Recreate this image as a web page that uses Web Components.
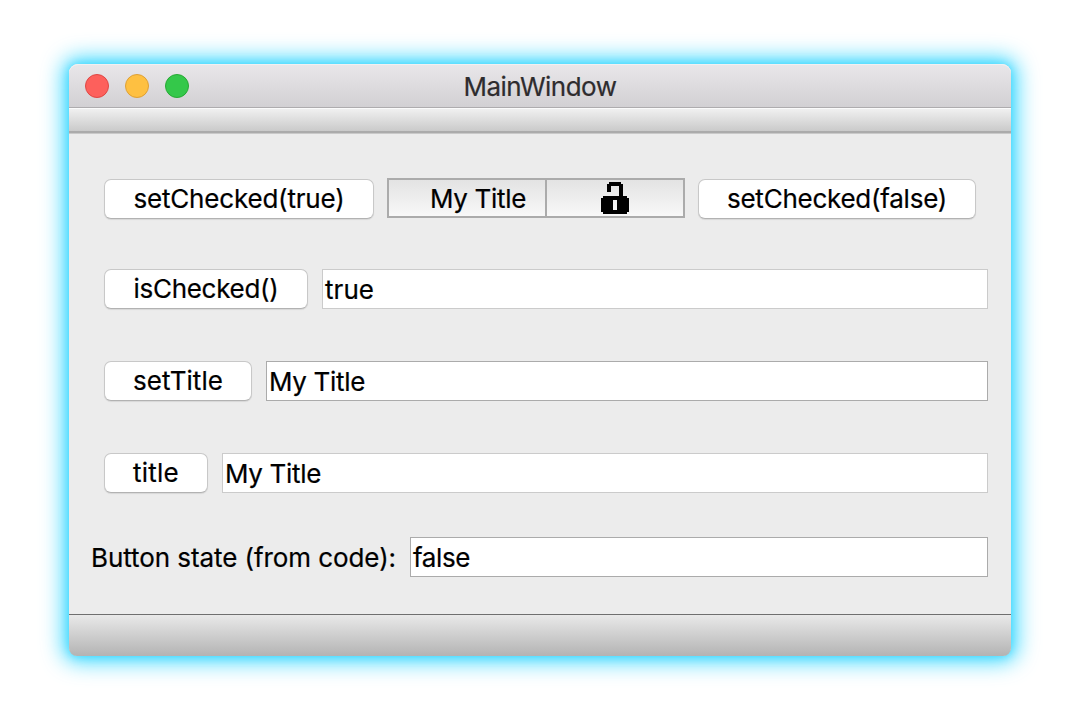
<!DOCTYPE html>
<html lang="en">
<head>
<meta charset="utf-8">
<title>MainWindow</title>
<style>
html, body { margin: 0; height: 100%; background: #fff; overflow: hidden; }
body { box-sizing: border-box; padding: 64px 69px; font: 26px/30px Inter, "Liberation Sans", sans-serif; font-feature-settings: "calt" 0; color: #000; -webkit-text-stroke: .2px; }
</style>
</head>
<body>
<main-window>
  <title-bar slot="title"><fit-text width="153">MainWindow</fit-text></title-bar>
  <form-row style="--top:45px">
    <push-button style="width:270px"><fit-text width="211">setChecked(true)</fit-text></push-button>
    <title-toggle><fit-text width="96">My Title</fit-text></title-toggle>
    <push-button style="width:278px"><fit-text width="220">setChecked(false)</fit-text></push-button>
  </form-row>
  <form-row style="--top:50px">
    <push-button style="width:204px"><fit-text width="145">isChecked()</fit-text></push-button>
    <line-field readonly><fit-text width="49">true</fit-text></line-field>
  </form-row>
  <form-row style="--top:52px">
    <push-button style="width:148px"><fit-text width="90">setTitle</fit-text></push-button>
    <line-field><fit-text width="96">My Title</fit-text></line-field>
  </form-row>
  <form-row style="--top:52px">
    <push-button style="width:104px"><fit-text width="46">title</fit-text></push-button>
    <line-field readonly><fit-text width="96">My Title</fit-text></line-field>
  </form-row>
  <form-row style="--top:44px; --left:22px">
    <field-label><fit-text width="305">Button state (from code):</fit-text></field-label>
    <line-field><fit-text width="57">false</fit-text></line-field>
  </form-row>
</main-window>
<script>
const define = (name, html, setup) => customElements.define(name, class extends HTMLElement {
  constructor() {
    super();
    this.attachShadow({ mode: 'open' }).innerHTML = html.trim();
  }
  connectedCallback() { if (setup) setup(this); }
});

define('main-window', `
<style>
:host { display: flex; flex-direction: column; box-sizing: border-box; width: 942px; height: 592px; border-radius: 9px; background: #ececec;
  box-shadow: 0 0 8px 1px rgba(0,205,255,.4), 0 0 21px 6px rgba(0,205,255,.74); }
.tools { height: 22px; border-top: 1px solid #fbfbfb; background: linear-gradient(#f0f0f0, #cacaca); border-bottom: 2px solid #ababab; }
.edge { height: 1px; background: #c9c9c9; }
.body { flex: 1; }
.status { height: 41px; border-top: 1px solid #6f6f6f; background: linear-gradient(#e9e9e9, #b3b3b3); border-radius: 0 0 8px 8px; }
</style>
<slot name="title"></slot><div class="tools"></div><div class="edge"></div>
<div class="body"><slot></slot></div><div class="status"></div>`);

define('title-bar', `
<style>
:host { display: grid; grid-template-columns: 1fr auto 1fr; grid-template-rows: 43px; height: 43px; border-bottom: 1px solid #aeacae; border-radius: 9px 9px 0 0;
  background: linear-gradient(#e9e7ea, #d2d0d3); color: #2e2c2e; box-shadow: inset 0 1px #f1f0f1; }
.lights { display: flex; gap: 16px; padding: 10px 0 0 16px; }
i { width: 24px; height: 24px; border-radius: 50%; box-sizing: border-box; background: #fd605c; border: 1px solid #df4744; }
i:nth-child(2) { background: #fec041; border-color: #dea035; }
i:nth-child(3) { background: #34c84a; border-color: #27a934; }
.t { padding-top: 8px; }
</style>
<div class="lights"><i></i><i></i><i></i></div><div class="t"><slot></slot></div><span></span>`);

define('form-row', `
<style>
:host { display: flex; gap: 14px; height: 40px; padding: var(--top) 23px 0 var(--left, 35px); }
</style><slot></slot>`);

define('push-button', `
<style>
:host { display: flex; justify-content: center; box-sizing: border-box; height: 40px; padding-top: 4px; flex: none; background: #fff;
  border: 1px solid #c8c8c8; border-bottom-color: #b2b2b2; border-radius: 7px; box-shadow: 0 1px 1px rgba(0,0,0,.09); }
</style><slot></slot>`);

define('title-toggle', `
<style>
:host { display: flex; box-sizing: border-box; width: 298px; height: 40px; margin: -1px -1px 0; border: 2px solid #ababab; background: linear-gradient(#e3e3e3, #f8f8f8); }
.name { box-sizing: border-box; width: 158px; padding: 4px 0 0 41px; border-right: 2px solid #ababab; }
svg { display: block; margin: 2px 0 0 54px; }
</style>
<div class="name"><slot></slot></div>
<svg width="28" height="32" viewBox="0 0 14 16" shape-rendering="crispEdges"><path fill-rule="evenodd" d="M4 0h6v1h1v6h2v1h1v7h-1v1H1v-1H0V8h1V7h8V2H5v3H3V1h1zM6 9v5h2V9z"/></svg>`);

define('line-field', `
<style>
:host { display: block; flex: 1; box-sizing: border-box; height: 40px; padding: 5px 0 0 2px; background: #fff; border: 1px solid #ababab; }
:host([readonly]) { border-color: #cbcbcb; }
</style><slot></slot>`);

define('field-label', `
<style>:host { display: block; flex: none; width: 305px; padding-top: 6px; }</style><slot></slot>`);

/* Text run tracked so that it fills a given advance width. */
define('fit-text', `
<style>:host { display: inline-block; white-space: nowrap; line-height: 30px; vertical-align: top; }</style><slot></slot>`, el => {
  const natural = el.getBoundingClientRect().width;
  const spacing = (el.getAttribute('width') - natural) / el.textContent.length;
  el.style.letterSpacing = spacing.toFixed(3) + 'px';
});
</script>
</body>
</html>
